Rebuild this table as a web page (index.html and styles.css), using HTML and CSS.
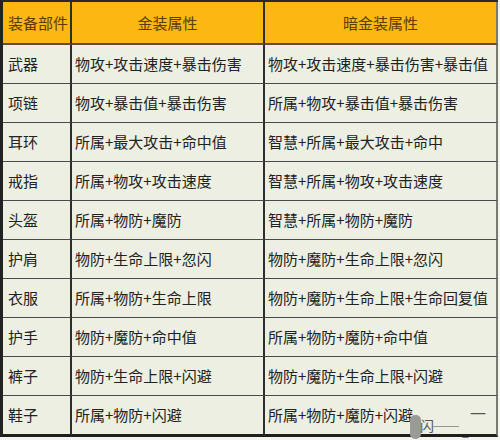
FILE: index.html
```html
<!DOCTYPE html>
<html lang="zh-CN">
<head>
<meta charset="utf-8">
<title>装备属性</title>
<link rel="stylesheet" href="styles.css">
</head>
<body>
<div class="wrap">
<table class="equip">
  <colgroup>
    <col class="c1"><col class="c2"><col class="c3">
  </colgroup>
  <thead>
    <tr><th class="left">装备部件</th><th>金装属性</th><th>暗金装属性</th></tr>
  </thead>
  <tbody>
    <tr><td>武器</td><td>物攻+攻击速度+暴击伤害</td><td>物攻+攻击速度+暴击伤害+暴击值</td></tr>
    <tr><td>项链</td><td>物攻+暴击值+暴击伤害</td><td>所属+物攻+暴击值+暴击伤害</td></tr>
    <tr><td>耳环</td><td>所属+最大攻击+命中值</td><td>智慧+所属+最大攻击+命中</td></tr>
    <tr><td>戒指</td><td>所属+物攻+攻击速度</td><td>智慧+所属+物攻+攻击速度</td></tr>
    <tr><td>头盔</td><td>所属+物防+魔防</td><td>智慧+所属+物防+魔防</td></tr>
    <tr><td>护肩</td><td>物防+生命上限+忽闪</td><td>物防+魔防+生命上限+忽闪</td></tr>
    <tr><td>衣服</td><td>所属+物防+生命上限</td><td>物防+魔防+生命上限+生命回复值</td></tr>
    <tr><td>护手</td><td>物防+魔防+命中值</td><td>所属+物防+魔防+命中值</td></tr>
    <tr><td>裤子</td><td>物防+生命上限+闪避</td><td>物防+魔防+生命上限+闪避</td></tr>
    <tr class="last"><td>鞋子</td><td>所属+物防+闪避</td><td>所属+物防+魔防+闪避</td></tr>
  </tbody>
</table>
<div class="mark"><span class="blob"></span><span class="mt">闪——</span><span class="m2">一</span><span class="m3">_</span></div>
</div>
</body>
</html>
```
FILE: styles.css
```css
html, body {
  margin: 0;
  padding: 0;
  background: #f4f4ee;
}
.wrap {
  position: relative;
  width: 500px;
  height: 440px;
  overflow: hidden;
}
.equip {
  width: 498px;
  table-layout: fixed;
  border-collapse: separate;
  border-spacing: 0;
  border-top: 2px solid #2a2a2a;
  border-left: 3px solid #222;
  font-family: "Noto Sans CJK SC", "Microsoft YaHei", sans-serif;
  font-size: 15px;
  color: #222;
  background: #ecefe2;
}
.c1 { width: 69px; }
.c2 { width: 193px; }
.c3 { width: 233px; }
.equip th, .equip td {
  padding: 0;
  border-right: 2px solid #2e2e2e;
  border-bottom: 1px solid #4a4a4a;
  white-space: nowrap;
  overflow: hidden;
  line-height: 20px;
}
.equip th {
  height: 41px;
  background: #fcb713;
  color: #5a3b00;
  font-weight: normal;
  text-align: center;
  border-bottom: 2px solid #5a5040;
}
.equip th.left {
  text-align: left;
  padding-left: 5px;
}
.equip td {
  height: 38px;
  padding-left: 3px;
}
.equip td:first-child {
  padding-left: 5px;
}
.equip th:last-child, .equip td:last-child {
  border-right: 2px solid #7a7a70;
}
.equip tr.last td {
  border-bottom: 3px solid #1e1e1e;
}
.mark {
  position: absolute;
  left: 400px;
  top: 405px;
  width: 100px;
  height: 35px;
  color: #555;
  font-family: "Noto Sans CJK SC", sans-serif;
}
.blob {
  position: absolute;
  left: 10px;
  top: 10px;
  width: 11px;
  height: 24px;
  border-radius: 5px;
  background: #9a9a96;
}
.mt {
  position: absolute;
  left: 20px;
  top: 12px;
  font-size: 14px;
  line-height: 16px;
  letter-spacing: -2px;
}
.m2 {
  position: absolute;
  left: 70px;
  top: 0;
  font-size: 16px;
  line-height: 16px;
}
.m3 {
  position: absolute;
  left: 62px;
  top: 19px;
  font-size: 12px;
  line-height: 14px;
}
```
